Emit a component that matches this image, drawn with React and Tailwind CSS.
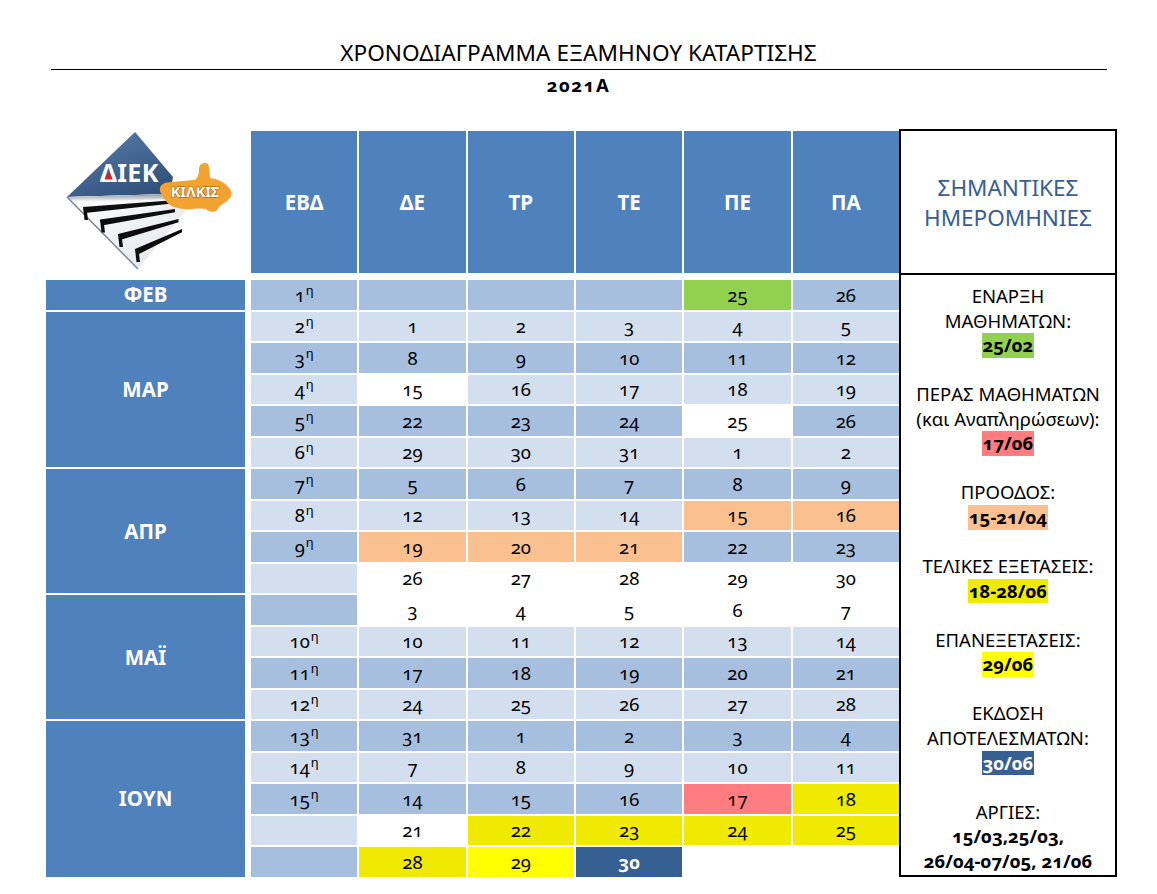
import React from 'react';

const M = 'bg-[#a7bfde]';
const L = 'bg-[#d3dfee]';

// colour codes for cells that leave the row tone
const fills = {
  w: 'bg-white',
  n: 'bg-white',
  g: 'bg-[#92d050]',
  o: 'bg-[#fac090]',
  p: 'bg-[#ff7c80]',
  y: 'bg-[#f0ea00]',
  Y: 'bg-[#ffff00]',
  b: 'bg-[#366092] text-white font-bold',
};

const months = {
  0: { label: 'ΦΕΒ', span: 'row-span-1' },
  1: { label: 'ΜΑΡ', span: 'row-span-5' },
  6: { label: 'ΑΠΡ', span: 'row-span-4' },
  10: { label: 'ΜΑΪ', span: 'row-span-4' },
  14: { label: 'ΙΟΥΝ', span: 'row-span-5' },
};

const rows = [
  { wk: '1', t: M, c: [['', 0], ['', 0], ['', 0], ['25', 'g'], ['26', 0]] },
  { wk: '2', t: L, c: [['1', 0], ['2', 0], ['3', 0], ['4', 0], ['5', 0]] },
  { wk: '3', t: M, c: [['8', 0], ['9', 0], ['10', 0], ['11', 0], ['12', 0]] },
  { wk: '4', t: L, c: [['15', 'w'], ['16', 0], ['17', 0], ['18', 0], ['19', 0]] },
  { wk: '5', t: M, c: [['22', 0], ['23', 0], ['24', 0], ['25', 'w'], ['26', 0]] },
  { wk: '6', t: L, c: [['29', 0], ['30', 0], ['31', 0], ['1', 0], ['2', 0]] },
  { wk: '7', t: M, c: [['5', 0], ['6', 0], ['7', 0], ['8', 0], ['9', 0]] },
  { wk: '8', t: L, c: [['12', 0], ['13', 0], ['14', 0], ['15', 'o'], ['16', 'o']] },
  { wk: '9', t: M, c: [['19', 'o'], ['20', 'o'], ['21', 'o'], ['22', 0], ['23', 0]] },
  { wk: '', t: L, c: [['26', 'w'], ['27', 'w'], ['28', 'w'], ['29', 'w'], ['30', 'w']] },
  { wk: '', t: M, c: [['3', 'w'], ['4', 'w'], ['5', 'w'], ['6', 'w'], ['7', 'w']] },
  { wk: '10', t: L, c: [['10', 0], ['11', 0], ['12', 0], ['13', 0], ['14', 0]] },
  { wk: '11', t: M, c: [['17', 0], ['18', 0], ['19', 0], ['20', 0], ['21', 0]] },
  { wk: '12', t: L, c: [['24', 0], ['25', 0], ['26', 0], ['27', 0], ['28', 0]] },
  { wk: '13', t: M, c: [['31', 0], ['1', 0], ['2', 0], ['3', 0], ['4', 0]] },
  { wk: '14', t: L, c: [['7', 0], ['8', 0], ['9', 0], ['10', 0], ['11', 0]] },
  { wk: '15', t: M, c: [['14', 0], ['15', 0], ['16', 0], ['17', 'p'], ['18', 'y']] },
  { wk: '', t: L, c: [['21', 'w'], ['22', 'y'], ['23', 'y'], ['24', 'y'], ['25', 'y']] },
  { wk: '', t: M, c: [['28', 'y'], ['29', 'Y'], ['30', 'b'], ['', 'n'], ['', 'n']] },
];

const notes = [
  { lines: ['ΕΝΑΡΞΗ', 'ΜΑΘΗΜΑΤΩΝ:'], date: '25/02', hl: 'bg-[#92d050]' },
  { lines: ['ΠΕΡΑΣ ΜΑΘΗΜΑΤΩΝ', '(και Αναπληρώσεων):'], date: '17/06', hl: 'bg-[#ff7c80]' },
  { lines: ['ΠΡΟΟΔΟΣ:'], date: '15-21/04', hl: 'bg-[#fac090]' },
  { lines: ['ΤΕΛΙΚΕΣ ΕΞΕΤΑΣΕΙΣ:'], date: '18-28/06', hl: 'bg-[#f0ea00]' },
  { lines: ['ΕΠΑΝΕΞΕΤΑΣΕΙΣ:'], date: '29/06', hl: 'bg-[#ffff00]' },
  { lines: ['ΕΚΔΟΣΗ', 'ΑΠΟΤΕΛΕΣΜΑΤΩΝ:'], date: '30/06', hl: 'bg-[#366092] text-white' },
];

// one step of the staircase: slanted bar plus the short drop at its left end
const Step = ({ lx, ly, rx, ry, t }) => (
  <g fill="#0d0d0d">
    <polygon points={`${lx},${ly} ${rx},${ry} ${rx},${ry + t * 0.55} ${lx + 2},${ly + t}`} />
    <polygon points={`${lx},${ly} ${lx + 3.5},${ly + 1} ${lx + 5},${ly + 13} ${lx + 1.5},${ly + 13}`} />
  </g>
);

const Logo = () => (
  <svg width="199" height="142" viewBox="0 0 199 142">
    <defs>
      <linearGradient id="logoBlue" x1="0" y1="0" x2="0.6" y2="1">
        <stop offset="0" stopColor="#5a7eac" />
        <stop offset="1" stopColor="#33537e" />
      </linearGradient>
      <linearGradient id="logoStair" x1="0" y1="0" x2="1" y2="1">
        <stop offset="0" stopColor="#ffffff" />
        <stop offset="1" stopColor="#dfe4ea" />
      </linearGradient>
      <linearGradient id="logoShade" x1="0" y1="0" x2="0" y2="1">
        <stop offset="0" stopColor="#8c96a3" />
        <stop offset="1" stopColor="#ffffff" />
      </linearGradient>
    </defs>
    <polygon points="89,1 21,66 124,63 127,46" fill="url(#logoBlue)" />
    <polygon points="21,66 124,63 144,75 92,138" fill="url(#logoStair)" />
    <polygon points="21,66 124,63 125,68 26,71" fill="url(#logoShade)" />
    <line x1="21" y1="66" x2="92" y2="138" stroke="#7d8792" strokeWidth="1.5" />
    <Step lx={37} ly={76} rx={124} ry={69.5} t={6} />
    <Step lx={54} ly={88.5} rx={129} ry={78} t={6} />
    <Step lx={72} ly={103} rx={132.5} ry={88} t={6} />
    <Step lx={89} ly={118} rx={136} ry={98} t={6} />
    {/* ΔΙΕΚ */}
    <text
      x="54"
      y="51"
      fontFamily="'Noto Sans', sans-serif"
      fontWeight="700"
      fontSize="25"
      letterSpacing="0.4"
      fill="#fff"
    >
      ΔΙΕΚ
    </text>
    <polygon points="62.7,40.5 58.6,48.5 66.8,48.5" fill="#d9202a" />
    {/* orange county blob */}
    <path
      d="M114,60 C113,54 118,51 126,51 L148,49 C152,48 153,43 153,38 C153,31 163,30 163,36 L164,47 C172,48 180,52 183,57 C187,61 186,66 182,69 C180,72 174,73 172,78 C170,82 162,81 160,78 C150,76 142,80 132,77 C124,76 118,70 114,60 Z"
      fill="#f2a22e"
    />
    <text
      x="149"
      y="66"
      textAnchor="middle"
      fontFamily="'Noto Sans', sans-serif"
      fontWeight="700"
      fontSize="14.5"
      fill="#fff"
      stroke="#a7600c"
      strokeWidth="1.2"
      paintOrder="stroke"
    >
      ΚΙΛΚΙΣ
    </text>
  </svg>
);

const App = () => {
  return (
    <div className="min-h-[894px] w-[1157px] bg-white font-['Noto_Sans',sans-serif] text-black oldstyle-nums">
      {/* Title */}
      <div className="flex flex-col items-center pt-[38px]">
        <h1 className="text-[22.6px] leading-[30px] font-normal">ΧΡΟΝΟΔΙΑΓΡΑΜΜΑ ΕΞΑΜΗΝΟΥ ΚΑΤΑΡΤΙΣΗΣ</h1>
        <div className="mt-[1px] h-px w-[1056px] bg-black" />
        <div className="mt-[4px] text-[18.5px] leading-[22px] font-bold tracking-[1.5px]">2021Α</div>
      </div>

      <div className="mt-[33px] flex items-start pl-[46px]">
        {/* Calendar */}
        <div className="mt-[2px] grid grid-cols-[203px_repeat(6,106.33px)] grid-rows-[147px_repeat(19,29.5px)] gap-[2px]">
          <div className="flex h-[142px] w-[199px] items-center justify-center">
            <Logo />
          </div>
          {['ΕΒΔ', 'ΔΕ', 'ΤΡ', 'ΤΕ', 'ΠΕ', 'ΠΑ'].map((d) => (
            <div
              key={d}
              className="flex h-[142px] items-center justify-center bg-[#4f81bd] text-[20.5px] font-bold text-white"
            >
              {d}
            </div>
          ))}

          {rows.map((r, i) => (
            <React.Fragment key={i}>
              {months[i] && (
                <div
                  className={`${months[i].span} col-start-1 flex w-[199px] items-center justify-center bg-[#4f81bd] text-[20.5px] font-bold text-white`}
                >
                  {months[i].label}
                </div>
              )}
              <div className={`flex items-center justify-center text-[18.5px] leading-none ${r.t}`}>
                {r.wk && (
                  <span>
                    {r.wk}
                    <sup className="relative -top-[7px] ml-[1px] text-[13px]">η</sup>
                  </span>
                )}
              </div>
              {r.c.map(([v, f], j) => (
                <div
                  key={j}
                  className={`flex items-center justify-center text-[18.5px] leading-none ${f ? fills[f] : r.t}`}
                >
                  {v}
                </div>
              ))}
            </React.Fragment>
          ))}
        </div>

        {/* Important dates */}
        <div className="flex h-[748px] w-[218px] flex-col border-2 border-black">
          <div className="flex h-[144px] flex-col items-center justify-center border-b-2 border-black pt-[2px] text-[22.5px] leading-[30px] text-[#376092]">
            <span>ΣΗΜΑΝΤΙΚΕΣ</span>
            <span>ΗΜΕΡΟΜΗΝΙΕΣ</span>
          </div>
          <div className="flex flex-col items-center pt-[9px] text-center text-[18.5px] leading-[24.56px]">
            {notes.map((n) => (
              <div key={n.date} className="mb-[24.56px] flex flex-col items-center">
                {n.lines.map((l) => (
                  <span key={l}>{l}</span>
                ))}
                <span className={`px-[1px] font-bold ${n.hl}`}>{n.date}</span>
              </div>
            ))}
            <div className="flex flex-col items-center">
              <span>ΑΡΓΙΕΣ:</span>
              <span className="font-bold">15/03,25/03,</span>
              <span className="font-bold">26/04-07/05, 21/06</span>
            </div>
          </div>
        </div>
      </div>
    </div>
  );
};

export default App;
